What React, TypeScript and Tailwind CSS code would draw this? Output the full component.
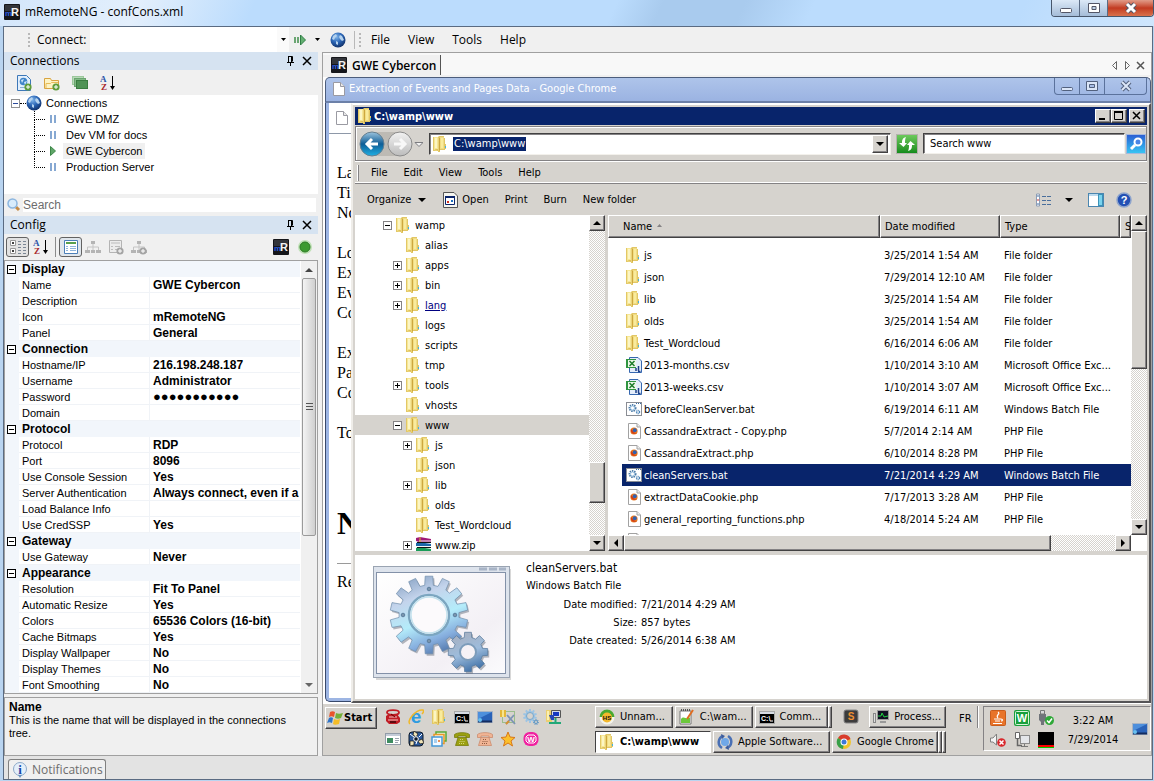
import React from 'react';
import clsx from 'clsx';

const SANS = "font-['Liberation_Sans',Arial,sans-serif]";
const SEGOE = "font-['Open_Sans','Noto_Sans',sans-serif]";
const TAHOMA = "font-['DejaVu_Sans_Condensed','DejaVu_Sans',sans-serif]";
const RAISED = 'border border-t-white border-l-white border-r-[#424142] border-b-[#424142] bg-[#d6d3ce] shadow-[inset_-1px_-1px_0_#848284]';
const SUNKEN = 'border border-t-[#424142] border-l-[#424142] border-r-[#f3f1ec] border-b-[#f3f1ec] shadow-[inset_1px_1px_0_#848284] bg-white';

interface IconProps {
    className?: string;
}

/* ---------- shared drawings ---------- */

const gearPoints = (cx: number, cy: number, outer: number, inner: number, teeth: number) => {
    const pts: string[] = [];
    const step = (Math.PI * 2) / teeth;
    for (let i = 0; i < teeth; i++) {
        const a = i * step - Math.PI / 2;
        [[-0.32, inner], [-0.22, outer], [0.22, outer], [0.32, inner]].forEach(([k, r]) => {
            pts.push(`${(cx + Math.cos(a + k * step) * r).toFixed(1)},${(cy + Math.sin(a + k * step) * r).toFixed(1)}`);
        });
    }
    return pts.join(' ');
};

const folderArt = (
    <>
        <path d="M0 1 H5 L6 0 H11 V2 H12 V8 H13 V13 H12 V14 H7 V16 H5 V15 H0Z" fill="#e2c766" />
        <path d="M6 1 H11 V13 H6Z" fill="#f1dc84" />
        <path d="M1 1 H5 V15 L1 14Z" fill="#f6e796" />
        <path d="M2 2 H4 V12 H2Z" fill="#fcf5c4" />
        <path d="M5 2 H6 V15 H5Z" fill="#ead27a" />
        <path d="M6 2 L7 1 V14 L6 15Z" fill="#cda83e" />
        <path d="M8 2 H10 V12 H8Z" fill="#f9eb9c" />
        <path d="M1 13 L5 15 V13Z" fill="#dfc15c" />
        <path d="M12 10 H13 V12 H12Z" fill="#3fb2e6" />
    </>
);

const Folder: React.FC<IconProps> = ({ className }) => (
    <svg className={clsx('h-4 w-[14px] shrink-0', className)} viewBox="0 0 14 16">
        {folderArt}
    </svg>
);

const MrLogo: React.FC = () => (
    <svg className="h-4 w-4 shrink-0" viewBox="0 0 16 16">
        <rect width="16" height="16" rx="1" fill="#15161a" />
        <rect x="1" y="1" width="14" height="6" fill="#33353a" />
        <text x="1" y="12" fontSize="8" fontWeight="bold" fontFamily="Liberation Sans" fill="#2c5ee0">m</text>
        <text x="7" y="12" fontSize="11" fontWeight="bold" fontFamily="Liberation Sans" fill="#f4f4f4">R</text>
    </svg>
);

const Globe: React.FC = () => (
    <svg className="h-4 w-4 shrink-0" viewBox="0 0 16 16">
        <defs>
            <radialGradient id="globe" cx="0.4" cy="0.3" r="0.75">
                <stop offset="0" stopColor="#7fb4ea" />
                <stop offset="0.5" stopColor="#2a64b4" />
                <stop offset="1" stopColor="#0f2c62" />
            </radialGradient>
        </defs>
        <circle cx="8" cy="8" r="7.5" fill="url(#globe)" />
        <path d="M3 4 L6 2 L7 4 L5 6 L4 8 L2 7Z M10 3 L12 4 L14 8 L12 9 L10 7 L9 5Z M6 9 L8 10 L8 13 L6 12Z" fill="#b4d2ee" />
    </svg>
);

const Triangle: React.FC<{ dir: 'up' | 'down' | 'left' | 'right'; color?: string }> = ({ dir, color = '#000' }) => {
    const d = {
        up: 'M0 6 L4 2 L8 6Z',
        down: 'M0 2 L4 6 L8 2Z',
        left: 'M6 0 L2 4 L6 8Z',
        right: 'M2 0 L6 4 L2 8Z',
    }[dir];
    return (
        <svg className="h-2 w-2 shrink-0" viewBox="0 0 8 8">
            <path d={d} fill={color} />
        </svg>
    );
};

const AZSort: React.FC = () => (
    <svg className="h-4 w-4" viewBox="0 0 16 16" fontSize="9" fontWeight="bold" fontFamily="Liberation Serif">
        <text x="0" y="7" fill="#2b55a8">A</text>
        <text x="1" y="15" fill="#a8282c">Z</text>
        <path d="M12.500 1 V13" stroke="#000" />
        <path d="M10 11 H15 L12.500 15Z" fill="#000" />
    </svg>
);

const PlusBadge: React.FC<{ color: string }> = ({ color }) => (
    <>
        <circle cx="12" cy="12" r="3.6" fill={color} />
        <path d="M10 12 H14 M12 10 V14" stroke="#fff" />
    </>
);

const Page: React.FC = () => (
    <svg className="h-4 w-4 shrink-0" viewBox="0 0 16 16">
        <path d="M2.500 1.500 H9.500 L13.500 5.500 V14.500 H2.500Z" fill="#fff" stroke="#9a9aa2" />
        <path d="M9.500 1.500 V5.500 H13.500" fill="#e8e8e8" stroke="#9a9aa2" />
    </svg>
);

/* ---------- classic controls ---------- */

interface ScrollbarProps {
    before: number;
    thumb: number;
    after: number;
    horizontal?: boolean;
}

const Scrollbar: React.FC<ScrollbarProps> = ({ before, thumb, after, horizontal }) => (
    <div
        className={clsx(
            'flex shrink-0 bg-[repeating-conic-gradient(#ffffff_0_25%,#d6d3ce_0_50%)] bg-[length:2px_2px]',
            horizontal ? 'h-4' : 'w-4 flex-col'
        )}
    >
        <button aria-label="Scroll back" className={clsx('flex h-4 w-4 shrink-0 items-center justify-center', RAISED)}>
            <Triangle dir={horizontal ? 'left' : 'up'} />
        </button>
        <div className="basis-0" style={{ flexGrow: before }} />
        <div className={clsx('basis-0', RAISED)} style={{ flexGrow: thumb }} />
        <div className="basis-0" style={{ flexGrow: after }} />
        <button aria-label="Scroll forward" className={clsx('flex h-4 w-4 shrink-0 items-center justify-center', RAISED)}>
            <Triangle dir={horizontal ? 'right' : 'down'} />
        </button>
    </div>
);

/* ---------- title bar and main toolbar ---------- */

const TitleBar: React.FC = () => (
    <header className="flex h-[26px] shrink-0 items-start justify-between bg-[linear-gradient(115deg,#d3e6fb_0%,#e3effc_12%,#bbdcfd_22%,#bbdcfd_53%,#a9cbee_57%,#a9cbee_64%,#bbdcfd_70%,#bbdcfd_88%,#cfe6fd_100%)]">
        <div className={clsx('flex h-6 items-center gap-[5px] pl-1 text-xs', SEGOE)}>
            <MrLogo />
            <h1>mRemoteNG - confCons.xml</h1>
        </div>
        <div className="flex h-[17px] overflow-hidden rounded-b-[4px] border border-t-0 border-[#47566b]">
            <button aria-label="Minimize" className="flex w-7 items-center justify-center border-r border-[#5b6c84] bg-linear-to-b from-[#dce9f7] to-[#a4bcd8]">
                <svg className="h-[14px] w-3" viewBox="0 0 12 14"><rect x="0.5" y="7.5" width="11" height="4" rx="1" fill="#fff" stroke="#535666" /></svg>
            </button>
            <button aria-label="Maximize" className="flex w-7 items-center justify-center border-r border-[#5b6c84] bg-linear-to-b from-[#dce9f7] to-[#a4bcd8]">
                <svg className="h-[14px] w-3" viewBox="0 0 12 14"><path d="M.5 2.5 H11.5 V11.5 H.5Z M4 5.500 V8.500 H8 V5.500Z" fill="#fff" fillRule="evenodd" stroke="#535666" /></svg>
            </button>
            <button aria-label="Close" className="flex w-[45px] items-center justify-center bg-linear-to-b from-[#e09b88] via-[#c23a20] to-[#d8714c]">
                <svg className="h-[14px] w-3" viewBox="0 0 12 14"><path d="M2 3 L10 11 M10 3 L2 11" stroke="#535666" strokeWidth="5" /><path d="M2 3 L10 11 M10 3 L2 11" stroke="#fff" strokeWidth="3" /></svg>
            </button>
        </div>
    </header>
);

const Grip: React.FC = () => (
    <span className="flex flex-col gap-[2px]">
        {[0, 1, 2, 3].map((i) => <span key={i} className="h-[2px] w-[2px] bg-[#b8b8b8]" />)}
    </span>
);

const MainToolbar: React.FC = () => (
    <div className={clsx('flex h-[25px] shrink-0 items-center bg-[#f0f0f0] text-xs', SEGOE)}>
        <div className="flex w-[86px] items-center gap-[7px] pl-6">
            <Grip />
            <label htmlFor="connect">Connect:</label>
        </div>
        <input id="connect" className="h-full w-[187px] bg-white px-1 outline-none" />
        <button aria-label="Connect history" className="flex h-full w-3 items-center justify-center bg-[#fafafa]">
            <svg className="h-1 w-[5px]" viewBox="0 0 5 4"><path d="M0 0 H5 L2.5 3Z" /></svg>
        </button>
        <button aria-label="Quick connect" className="ml-1 flex h-full items-center gap-2">
            <svg className="h-3 w-[14px]" viewBox="0 0 14 12">
                <path d="M2 3 V9 M5 3 V9" stroke="#6aa572" strokeWidth="2" />
                <path d="M7.500 1 L12.500 6 L7.500 11Z" fill="#63b071" stroke="#2f7e45" />
            </svg>
            <svg className="h-1 w-[5px]" viewBox="0 0 5 4"><path d="M0 0 H5 L2.5 3Z" /></svg>
        </button>
        <button aria-label="Connections" className="ml-[10px]"><Globe /></button>
        <div className="ml-2 flex h-[18px] items-center gap-[3px] border-l border-[#b8b8b8] pl-1"><Grip /></div>
        <nav className="flex pl-px">
            {['File', 'View', 'Tools', 'Help'].map((m) => (
                <button key={m} className="px-[9px]">{m}</button>
            ))}
        </nav>
    </div>
);

/* ---------- left side ---------- */

const PanelHeader: React.FC<{ title: string }> = ({ title }) => (
    <div className={clsx('flex h-[18px] shrink-0 items-center bg-[#d6e3f1] pr-[6px] pl-[6px] text-xs', SEGOE)}>
        <h2 className="flex-1">{title}</h2>
        <button aria-label={`Pin ${title}`}>
            <svg className="h-3 w-3" viewBox="0 0 12 12" fill="none" stroke="#000">
                <path d="M4.500 1.500 H8.500 V6.500 M4.500 1 V7 M7.500 2 V7 M3 7.500 H10 M6.500 8 V11" />
            </svg>
        </button>
        <button aria-label={`Close ${title}`} className="ml-[6px]">
            <svg className="h-[10px] w-[10px]" viewBox="0 0 10 10"><path d="M1 1 L9 9 M9 1 L1 9" stroke="#000" strokeWidth="1.500" /></svg>
        </button>
    </div>
);

const servers = [
    { name: 'GWE DMZ', active: false },
    { name: 'Dev VM for docs', active: false },
    { name: 'GWE Cybercon', active: true },
    { name: 'Production Server', active: false },
];

const ConnectionsPanel: React.FC = () => (
    <section>
        <PanelHeader title="Connections" />
        <div className="flex h-[25px] items-center gap-3 bg-[#f0f0f0] pl-3">
            <button aria-label="New connection">
                <svg className="h-4 w-4" viewBox="0 0 16 16">
                    <path d="M1.500 .5 H10.500 L14.500 4.500 V15.500 H1.500Z" fill="#e2effc" stroke="#3d78b8" />
                    <circle cx="7.500" cy="6.500" r="3.800" fill="#3f84c8" />
                    <path d="M5 5 L8 4 L6 8Z M8 7 L11 6 L9 10Z" fill="#cfe6fa" />
                    <path d="M4 12.500 H9" stroke="#8ab0d4" />
                    <PlusBadge color="#5f9c3a" />
                </svg>
            </button>
            <button aria-label="New folder">
                <svg className="h-4 w-4" viewBox="0 0 16 16">
                    <path d="M.5 3.500 H6.500 L7.500 5.500 H14.500 V13.500 H.5Z" fill="#fdf3c4" stroke="#d9a441" />
                    <path d="M2 13 V8.500 H6.500 L7.500 7.500 H14" fill="none" stroke="#e6bb59" />
                    <PlusBadge color="#5f9c3a" />
                </svg>
            </button>
            <button aria-label="View">
                <svg className="h-4 w-4" viewBox="0 0 16 16">
                    <rect x="0.5" y="1.500" width="11" height="8" fill="#b9d8b9" stroke="#9cc89c" />
                    <rect x="2.500" y="3.500" width="11" height="8" fill="#84ba87" stroke="#6aa66e" />
                    <rect x="4.500" y="5.500" width="11" height="8" fill="#4f9355" stroke="#397c40" />
                </svg>
            </button>
            <button aria-label="Sort"><AZSort /></button>
        </div>
        <ul className={clsx('h-[99px] overflow-hidden bg-white pl-[7px] text-[11px]', SANS)}>
            <li className="flex h-4 items-center">
                <span className="flex h-[9px] w-[9px] items-center justify-center border border-[#919191] text-[#2b4b9b]">
                    <span className="h-px w-[5px] bg-current" />
                </span>
                <span className="w-[6px] border-t border-dotted border-black" />
                <Globe />
                <span className="pl-1">Connections</span>
            </li>
            {servers.map((s, i) => (
                <li key={s.name} className="flex h-4 items-center pl-[23px]">
                    <span className="flex h-4 w-[11px] flex-col">
                        <span className="flex-1 border-b border-l border-dotted border-black" />
                        <span className={clsx('flex-1', i < servers.length - 1 && 'border-l border-dotted border-black')} />
                    </span>
                    <svg className="mx-1 h-[10px] w-2" viewBox="0 0 8 10">
                        {s.active
                            ? <path d="M1.500 .5 L6.500 5 L1.500 9.500Z" fill="#5fa668" stroke="#3c8748" />
                            : <path d="M2 1 V9 M6 1 V9" stroke="#86a8d2" strokeWidth="2" />}
                    </svg>
                    <span className={clsx('ml-[2px] h-4 px-[3px] leading-4', s.active && 'bg-[#f0f0f0]')}>{s.name}</span>
                </li>
            ))}
        </ul>
        <div className="flex h-[22px] items-center gap-[2px] bg-[#f0f0f0] pr-[2px] pl-[3px]">
            <svg className="h-[14px] w-[14px]" viewBox="0 0 14 14">
                <path d="M9 9 L12 12" stroke="#c58b46" strokeWidth="3" />
                <circle cx="5.500" cy="5.500" r="4.500" fill="#d8ecfc" stroke="#8cb6df" strokeWidth="1.500" />
            </svg>
            <input aria-label="Search connections" placeholder="Search" className={clsx('h-[14px] min-w-0 flex-1 bg-white text-xs outline-none placeholder:text-[#6d6d6d]', SANS)} />
        </div>
    </section>
);

type Row = [string, string?];

const properties: { group: string; rows: Row[] }[] = [
    { group: 'Display', rows: [['Name', 'GWE Cybercon'], ['Description'], ['Icon', 'mRemoteNG'], ['Panel', 'General']] },
    { group: 'Connection', rows: [['Hostname/IP', '216.198.248.187'], ['Username', 'Administrator'], ['Password', '●●●●●●●●●●●'], ['Domain']] },
    {
        group: 'Protocol',
        rows: [
            ['Protocol', 'RDP'], ['Port', '8096'], ['Use Console Session', 'Yes'],
            ['Server Authentication', 'Always connect, even if a'], ['Load Balance Info'], ['Use CredSSP', 'Yes'],
        ],
    },
    { group: 'Gateway', rows: [['Use Gateway', 'Never']] },
    {
        group: 'Appearance',
        rows: [
            ['Resolution', 'Fit To Panel'], ['Automatic Resize', 'Yes'], ['Colors', '65536 Colors (16-bit)'],
            ['Cache Bitmaps', 'Yes'], ['Display Wallpaper', 'No'], ['Display Themes', 'No'], ['Font Smoothing', 'No'],
        ],
    },
];

const HierarchyIcon: React.FC<{ plus?: boolean }> = ({ plus }) => (
    <svg className="h-4 w-4" viewBox="0 0 16 16">
        <path d="M8 4 V8 M2.500 11 V8 H13.500 V11 M8 8 V11" fill="none" stroke="#c4c4c4" />
        <path d="M6 2 H10 V5 H6Z M0 11 H5 V14 H0Z M6 11 H10 V14 H6Z M11 11 H16 V14 H11Z" fill="#b4b4b4" />
        {plus && <PlusBadge color="#a4a4a4" />}
    </svg>
);

const ConfigPanel: React.FC = () => (
    <section className="flex min-h-0 flex-1 flex-col">
        <PanelHeader title="Config" />
        <div className="flex h-[26px] shrink-0 items-center bg-[#f0f0f0] pr-[5px] pl-[2px]">
            <button aria-label="Categorized" className="flex h-5 w-[23px] items-center justify-center rounded-[3px] border border-[#626262] bg-[#e2e2e2]">
                <svg className="h-4 w-[18px]" viewBox="0 0 18 16" fill="none">
                    <path d="M1.500 1.500 H6.500 V6.500 H1.500Z M1.500 9.500 H6.500 V14.500 H1.500Z" fill="#fff" stroke="#9a9a9a" />
                    <path d="M3 4 H5 M4 3 V5 M3 12 H5 M4 11 V13" stroke="#000" />
                    <path d="M9 2.500 H12 M14 2.500 H17 M9 5.500 H12 M14 5.500 H17 M9 8.500 H12 M14 8.500 H17 M9 11.500 H12 M14 11.500 H17 M9 14.500 H12 M14 14.500 H17" stroke="#7b8795" />
                </svg>
            </button>
            <button aria-label="Alphabetical" className="ml-1"><AZSort /></button>
            <span className="mr-[3px] ml-[6px] h-5 w-px bg-[#8b8b8b]" />
            <button aria-label="Properties" className="flex h-5 w-[23px] items-center justify-center rounded-[3px] border border-[#626262] bg-[#e0e6ec]">
                <svg className="h-4 w-4" viewBox="0 0 16 16" fill="none">
                    <path d="M1.500 1.500 H14.500 V14.500 H1.500Z" fill="#fff" stroke="#4b7fb8" />
                    <path d="M3 4 H13" stroke="#59a04c" strokeWidth="2" />
                    <path d="M3 7.500 H5 M7 7.500 H13 M3 9.500 H5 M7 9.500 H13 M3 11.500 H5 M7 11.500 H13" stroke="#8db4dc" />
                </svg>
            </button>
            <div className="ml-[3px] flex gap-[7px]">
                <button aria-label="Inheritance"><HierarchyIcon /></button>
                <button aria-label="Default properties">
                    <svg className="h-4 w-4" viewBox="0 0 16 16" fill="none">
                        <path d="M1.500 1.500 H13.500 V13.500 H1.500Z" fill="#ececec" stroke="#b4b4b4" />
                        <path d="M3 4 H12 M3 7.500 H5 M7 7.500 H12 M3 10.500 H5 M7 10.500 H12" stroke="#bcbcbc" />
                        <PlusBadge color="#a4a4a4" />
                    </svg>
                </button>
                <button aria-label="Default inheritance"><HierarchyIcon plus /></button>
            </div>
            <button aria-label="Icon" className="ml-auto"><MrLogo /></button>
            <button aria-label="Status" className="ml-2">
                <svg className="h-4 w-4" viewBox="0 0 16 16">
                    <circle cx="8" cy="8" r="7" fill="#bfe0b6" />
                    <circle cx="8" cy="8" r="5" fill="#3c9a30" stroke="#2a7a22" />
                </svg>
            </button>
        </div>
        <div className="flex min-h-0 flex-1 overflow-hidden border border-[#a0a0a0] bg-white">
            <table className={clsx('h-min flex-1 table-fixed border-separate border-spacing-0 text-[11px] leading-[14px]', SANS)}>
                <colgroup>
                    <col className="w-[14px]" />
                    <col className="w-[131px]" />
                    <col />
                </colgroup>
                {properties.map((p) => (
                    <tbody key={p.group}>
                        <tr className="h-4 bg-[#f2f6fb]">
                            <td className="p-0">
                                <button aria-label={`Collapse ${p.group}`} className="ml-[2px] flex h-[9px] w-[9px] items-center justify-center border border-black bg-white">
                                    <span className="h-px w-[5px] bg-black" />
                                </button>
                            </td>
                            <th colSpan={2} className="p-0 pl-[3px] text-left text-xs leading-[14px] font-bold">{p.group}</th>
                        </tr>
                        {p.rows.map(([label, value]) => (
                            <tr key={label} className="h-4">
                                <td className="bg-[#f2f6fb] p-0" />
                                <th className="border-r border-b border-[#f0f3f7] p-0 pl-[3px] text-left font-normal whitespace-nowrap">{label}</th>
                                <td className={clsx('overflow-hidden border-b border-[#f0f3f7] p-0 pl-[3px] leading-[14px] font-bold whitespace-nowrap', label === 'Password' ? 'text-[13px]' : 'text-xs')}>{value}</td>
                            </tr>
                        ))}
                    </tbody>
                ))}
            </table>
            <div className="ml-px flex w-4 shrink-0 flex-col items-center bg-[#f0f0f0]">
                <button aria-label="Scroll up" className="flex h-[17px] w-full shrink-0 items-center justify-center"><Triangle dir="up" color="#444" /></button>
                <div className="flex min-h-0 w-[14px] grow-[255] basis-0 flex-col items-center justify-center gap-[2px] rounded-[2px] border border-[#9a9a9a] bg-linear-to-r from-[#f4f4f4] to-[#cfcfcf]">
                    <span className="h-px w-[7px] bg-[#555]" />
                    <span className="h-px w-[7px] bg-[#555]" />
                    <span className="h-px w-[7px] bg-[#555]" />
                </div>
                <div className="min-h-0 grow-[140] basis-0" />
                <button aria-label="Scroll down" className="flex h-[17px] w-full shrink-0 items-center justify-center"><Triangle dir="down" color="#666" /></button>
            </div>
        </div>
        <div className={clsx('mt-[3px] h-[59px] shrink-0 border border-[#a0a0a0] bg-[#f0f0f0] pt-[2px] pr-6 pl-1 text-[11px] leading-[13px]', SANS)}>
            <h3 className="text-xs leading-[14px] font-bold">Name</h3>
            <p>This is the name that will be displayed in the connections tree.</p>
        </div>
    </section>
);

/* ---------- remote desktop: browser behind the explorer ---------- */

const browserLines = ['Last', 'Time', 'Now', '', 'Log', 'Extr', 'Eve', 'Con', '', 'Extr', 'Page', 'Con', '', 'Total'];

const BrowserStrip: React.FC = () => (
    <div className="mb-px ml-[2px] flex w-[26px] shrink-0 flex-col overflow-hidden rounded-bl-[5px] border-b border-l border-[#38486a] bg-[#9db5e3] pb-[3px] pl-[3px]">
        <div className="flex h-[31px] shrink-0 items-center border-b border-[#8e98a8] bg-white pl-[5px]">
            <Page />
        </div>
        <div className="flex-1 bg-white pt-[29px] pl-2 font-['Liberation_Serif',serif] text-base leading-5">
            {browserLines.map((l, i) => <p key={i} className="h-5">{l}</p>)}
            <p className="mt-[60px] text-[32px] leading-10 font-bold">N</p>
            <hr className="mt-5 border-[#9a9a9a]" />
            <p className="mt-2">Rea</p>
        </div>
    </div>
);

/* ---------- explorer ---------- */

interface TreeNode {
    name: string;
    level: number;
    box?: '+' | '-';
}

const tree: TreeNode[] = [
    { name: 'wamp', level: 0, box: '-' },
    { name: 'alias', level: 1 },
    { name: 'apps', level: 1, box: '+' },
    { name: 'bin', level: 1, box: '+' },
    { name: 'lang', level: 1, box: '+' },
    { name: 'logs', level: 1 },
    { name: 'scripts', level: 1 },
    { name: 'tmp', level: 1 },
    { name: 'tools', level: 1, box: '+' },
    { name: 'vhosts', level: 1 },
    { name: 'www', level: 1, box: '-' },
    { name: 'js', level: 2, box: '+' },
    { name: 'json', level: 2 },
    { name: 'lib', level: 2, box: '+' },
    { name: 'olds', level: 2 },
    { name: 'Test_Wordcloud', level: 2 },
    { name: 'www.zip', level: 2, box: '+' },
];

const indents = ['pl-7', 'pl-[38px]', 'pl-12'];

const ZipIcon: React.FC = () => (
    <svg className="h-4 w-4 shrink-0" viewBox="0 0 16 16">
        <path d="M0 1 L4 0 L15 2 V5 H3 L0 4Z" fill="#a01878" />
        <path d="M3 4 H15 M3 9 H15 M3 14 H15" stroke="#eee" />
        <path d="M0 6 L3 5 L15 7 V9 H3 L0 9Z" fill="#1c68a8" />
        <path d="M0 11 L3 10 L15 12 V14 H3 L0 14Z" fill="#1a9c58" />
        <path d="M1 5.500 H15 M1 10.500 H15 M1 15.500 H15" stroke="#111" />
        <path d="M4 0 V5" stroke="#d8b430" />
    </svg>
);

const FolderTree: React.FC = () => (
    <ul className="min-w-0 flex-1 overflow-hidden">
        {tree.map((n) => (
            <li key={n.name} className={clsx('flex h-5 items-center', indents[n.level], n.name === 'www' && 'bg-[#d6d3ce]')}>
                <span className="w-[13px] shrink-0">
                    {n.box && (
                        <button aria-label={`Toggle ${n.name}`} className="flex h-[9px] w-[9px] items-center justify-center border border-[#848284] bg-white">
                            <svg className="h-[5px] w-[5px]" viewBox="0 0 5 5">
                                <path d={n.box === '+' ? 'M0 2.500 H5 M2.500 0 V5' : 'M0 2.500 H5'} stroke="#000" />
                            </svg>
                        </button>
                    )}
                </span>
                <span className="w-[19px] shrink-0">{n.name === 'www.zip' ? <ZipIcon /> : <Folder />}</span>
                {n.name === 'lang'
                    ? <a href="#lang" className="pt-px text-[#000080] underline">{n.name}</a>
                    : <span className="pt-px">{n.name}</span>}
            </li>
        ))}
    </ul>
);

const CsvIcon: React.FC = () => (
    <svg className="h-4 w-4" viewBox="0 0 16 16">
        <path d="M3.500 .5 H12 L15.500 4 V15.500 H3.500Z" fill="#e4edfa" stroke="#3768b0" />
        <rect x="0" y="2" width="10" height="9" fill="#2f9440" />
        <rect x="2" y="3" width="8" height="7" fill="#eef8ea" />
        <path d="M3.500 4 L8.500 9 M8.500 4 L3.500 9" stroke="#1e7c2c" strokeWidth="1.500" />
        <path d="M10 11 V14 M12.500 9 V14 M12 14.500 H14.500" fill="none" stroke="#1d3f88" strokeWidth="1.500" />
    </svg>
);

const BatIcon: React.FC = () => (
    <svg className="h-[14px] w-4" viewBox="0 0 16 14">
        <rect x="0.5" y="0.5" width="15" height="13" fill="#fff" stroke="#8a8d94" />
        <path d="M10 1.500 H15" stroke="#3b6ea5" strokeDasharray="1 1" />
        <circle cx="6.500" cy="6" r="3" fill="none" stroke="#4b7ba8" strokeWidth="2" strokeDasharray="1.400 .8" />
        <circle cx="6.500" cy="6" r="2" fill="none" stroke="#9ec3e2" />
        <circle cx="12" cy="10" r="1.500" fill="none" stroke="#4a83b8" strokeWidth="1.500" strokeDasharray="1 .5" />
    </svg>
);

const PhpIcon: React.FC = () => (
    <svg className="h-4 w-4" viewBox="0 0 16 16">
        <path d="M2.500 .5 H11 L14.500 4 V15.500 H2.500Z" fill="#fff" stroke="#a2a2a2" />
        <path d="M11 .5 V4 H14.500" fill="#eee" stroke="#a2a2a2" />
        <circle cx="8" cy="8" r="3.600" fill="#e8761c" />
        <circle cx="8.700" cy="7.300" r="2" fill="#2f62b4" />
        <path d="M5 6 C4 10 8 12 11 10 C9 10 7 9.500 6.800 8Z" fill="#d03c1a" />
    </svg>
);

interface FileEntry {
    name: string;
    date: string;
    type: string;
    icon: React.FC;
}

const files: FileEntry[] = [
    { name: 'js', date: '3/25/2014 1:54 AM', type: 'File folder', icon: Folder },
    { name: 'json', date: '7/29/2014 12:10 AM', type: 'File folder', icon: Folder },
    { name: 'lib', date: '3/25/2014 1:54 AM', type: 'File folder', icon: Folder },
    { name: 'olds', date: '3/25/2014 1:54 AM', type: 'File folder', icon: Folder },
    { name: 'Test_Wordcloud', date: '6/16/2014 6:06 AM', type: 'File folder', icon: Folder },
    { name: '2013-months.csv', date: '1/10/2014 3:10 AM', type: 'Microsoft Office Exc...', icon: CsvIcon },
    { name: '2013-weeks.csv', date: '1/10/2014 3:07 AM', type: 'Microsoft Office Exc...', icon: CsvIcon },
    { name: 'beforeCleanServer.bat', date: '6/19/2014 6:11 AM', type: 'Windows Batch File', icon: BatIcon },
    { name: 'CassandraExtract - Copy.php', date: '5/7/2014 2:14 AM', type: 'PHP File', icon: PhpIcon },
    { name: 'CassandraExtract.php', date: '6/10/2014 8:28 PM', type: 'PHP File', icon: PhpIcon },
    { name: 'cleanServers.bat', date: '7/21/2014 4:29 AM', type: 'Windows Batch File', icon: BatIcon },
    { name: 'extractDataCookie.php', date: '7/17/2013 3:28 AM', type: 'PHP File', icon: PhpIcon },
    { name: 'general_reporting_functions.php', date: '4/18/2014 5:24 AM', type: 'PHP File', icon: PhpIcon },
    { name: '', date: '', type: '', icon: PhpIcon },
];

const HEAD = 'h-[23px] border border-t-white border-l-white border-r-[#424142] border-b-[#424142] bg-[#d6d3ce] p-0 pt-px pl-1 text-left font-normal shadow-[inset_-1px_-1px_0_#848284]';

const FileTable: React.FC = () => (
    <div className="min-h-0 flex-1 overflow-hidden">
        <table className="w-full table-fixed border-separate border-spacing-0 whitespace-nowrap">
            <colgroup>
                <col className="w-[14px]" />
                <col />
                <col className="w-[120px]" />
                <col className="w-[120px]" />
                <col className="w-[11px]" />
            </colgroup>
            <thead>
                <tr>
                    <th colSpan={2} className={HEAD}>
                        <span className="flex items-center gap-[5px] pl-[10px]">
                            Name
                            <svg className="mb-[3px] h-1 w-[5px]" viewBox="0 0 5 4"><path d="M0 3 L2.500 0 L5 3Z" fill="#848284" /></svg>
                        </span>
                    </th>
                    <th className={HEAD}>Date modified</th>
                    <th className={HEAD}>Type</th>
                    <th className={clsx(HEAD, 'overflow-hidden')}>S</th>
                </tr>
                <tr className="h-[6px]"><td colSpan={5} className="p-0" /></tr>
            </thead>
            <tbody>
                {files.map(({ name, date, type, icon: Icon }) => {
                    const cell = clsx('p-0', name === 'cleanServers.bat' && 'bg-[#08246b] text-white');
                    return (
                        <tr key={name} className="h-[22px]">
                            <td className="p-0" />
                            <td className={cell}>
                                <span className="flex items-center pl-1">
                                    <span className="flex w-[18px]"><Icon /></span>
                                    <span className="pt-px">{name}</span>
                                </span>
                            </td>
                            <td className={clsx(cell, 'pt-px pl-1')}>{date}</td>
                            <td className={clsx(cell, 'pt-px pl-1')}>{type}</td>
                            <td className={cell} />
                        </tr>
                    );
                })}
            </tbody>
        </table>
    </div>
);

const AddressRow: React.FC = () => (
    <div className="mt-px flex h-[35px] shrink-0 items-center border border-[#848284] pl-[3px] shadow-[inset_1px_1px_0_#fff,0_1px_0_#fff]">
        <svg className="h-7 w-[64px] shrink-0" viewBox="0 0 64 28">
            <defs>
                <linearGradient id="back" x1="0" y1="0" x2="0" y2="1">
                    <stop offset="0" stopColor="#9cc4de" />
                    <stop offset="0.5" stopColor="#0f5e96" />
                    <stop offset="1" stopColor="#20b0e4" />
                </linearGradient>
                <linearGradient id="fwd" x1="0" y1="0" x2="0" y2="1">
                    <stop offset="0" stopColor="#f2f2f2" />
                    <stop offset="1" stopColor="#bcbcbc" />
                </linearGradient>
            </defs>
            <path d="M13 2 H42 V26 H13 C20 20 20 8 13 2Z" fill="#bdbab4" />
            <circle cx="13" cy="14" r="12" fill="url(#back)" stroke="#667f90" />
            <path d="M19 14 H9 M13 9 L8 14 L13 19" fill="none" stroke="#fff" strokeWidth="3" />
            <circle cx="41" cy="14" r="12" fill="url(#fwd)" stroke="#8b8b8b" />
            <path d="M35 14 H45 M41 9 L46 14 L41 19" fill="none" stroke="#f8f8f8" strokeWidth="3" />
            <path d="M56 12.500 H64 L60 16.500Z" fill="#f2f2f2" stroke="#7c7c80" />
        </svg>
        <div className={clsx('ml-[6px] flex h-[22px] min-w-0 flex-1 items-center p-[2px]', SUNKEN)}>
            <Folder className="mx-px" />
            <button className="ml-[5px] bg-[#08246b] px-px text-[11px] leading-[14px] text-white">C:\wamp\www</button>
            <button aria-label="Address history" className={clsx('ml-auto flex h-[18px] w-4 items-center justify-center', RAISED)}>
                <Triangle dir="down" />
            </button>
        </div>
        <button aria-label="Refresh" className="ml-[5px] border border-[#b5b2ad] bg-linear-to-b from-[#6cca5c] to-[#118c1c]">
            <svg className="h-[18px] w-5" viewBox="0 0 20 18">
                <path d="M9 2 C5 3 5 6 5 8 H2 L6.500 12 L10 8 H8 C8 6 8 4 9 2Z" fill="#fff" />
                <path d="M11 16 C15 15 15 12 15 10 H18 L13.500 6 L10 10 H12 C12 12 12 14 11 16Z" fill="#fff" />
            </svg>
        </button>
        <input aria-label="Search www" placeholder="Search www" className={clsx('ml-[5px] h-[21px] w-[202px] px-[6px] text-[11px] outline-none placeholder:text-black', SUNKEN)} />
        <button aria-label="Search" className="ml-px border border-[#a4b9dc] bg-linear-to-b from-[#2c5fd4] to-[#39c4f2]">
            <svg className="h-[18px] w-[18px]" viewBox="0 0 18 18">
                <circle cx="11" cy="7" r="3.500" fill="#4a86e6" stroke="#fff" strokeWidth="2" />
                <path d="M8 10 L4 14" stroke="#fff" strokeWidth="3" />
            </svg>
        </button>
    </div>
);

const GearPreview: React.FC = () => (
    <svg className="h-[114px] w-[138px] shrink-0" viewBox="0 0 138 114">
        <defs>
            <linearGradient id="gear" x1="0.3" y1="0" x2="0.7" y2="1">
                <stop offset="0" stopColor="#8fa8c8" />
                <stop offset="0.25" stopColor="#c4d4ec" />
                <stop offset="0.55" stopColor="#b4ecfa" />
                <stop offset="0.8" stopColor="#86aede" />
                <stop offset="1" stopColor="#4f74a8" />
            </linearGradient>
            <linearGradient id="gearSmall" x1="0.3" y1="0" x2="0.7" y2="1">
                <stop offset="0" stopColor="#a8b0c0" />
                <stop offset="0.5" stopColor="#9dbcdc" />
                <stop offset="1" stopColor="#3a6ca4" />
            </linearGradient>
            <linearGradient id="paper" x1="0" y1="0" x2="1" y2="1">
                <stop offset="0" stopColor="#fff" />
                <stop offset="0.7" stopColor="#f3f0f5" />
                <stop offset="1" stopColor="#fbfbfd" />
            </linearGradient>
        </defs>
        <rect x="3" y="3" width="135" height="111" fill="#d8d8d8" />
        <rect x="0.5" y="0.5" width="136" height="111" fill="#dde3ec" stroke="#9aa4b2" />
        <rect x="3.500" y="6.500" width="129" height="101" fill="url(#paper)" stroke="#8391a8" />
        <path d="M106 3 H133" stroke="#a8b4c6" strokeWidth="3" strokeDasharray="8 2" />
        <g transform="translate(1.500 2)" fill="#6d7480" opacity="0.5">
            <polygon points={gearPoints(56, 49, 39, 30, 14)} />
            <polygon points={gearPoints(95, 86, 20, 15, 8)} />
        </g>
        <polygon points={gearPoints(56, 49, 39, 30, 14)} fill="url(#gear)" stroke="#6f8caa" strokeWidth="0.7" />
        <circle cx="56" cy="49" r="20" fill="#fcfafc" stroke="#7ca6c0" strokeWidth="2.500" />
        <circle cx="56" cy="49" r="18" fill="none" stroke="#c4e2ee" strokeWidth="1.500" />
        {[[56, 23], [30, 49], [82, 49], [56, 75]].map(([x, y]) => (
            <circle key={`${x}-${y}`} cx={x} cy={y} r="1.800" fill="#7a94ac" stroke="#5d7f9e" />
        ))}
        <polygon points={gearPoints(95, 86, 20, 15, 8)} fill="url(#gearSmall)" stroke="#55779a" strokeWidth="0.7" />
        <circle cx="95" cy="86" r="8" fill="#f5f2f6" stroke="#7c9cba" strokeWidth="2" />
    </svg>
);

const details = [
    ['Date modified:', '7/21/2014 4:29 AM'],
    ['Size:', '857 bytes'],
    ['Date created:', '5/26/2014 6:38 AM'],
];

const Explorer: React.FC = () => (
    <div className={clsx('flex min-w-0 flex-1 flex-col border-2 border-t-white border-r-[#555456] border-b-[#555456] border-l-[#efede9] bg-[#d6d3ce] p-[2px] text-[11px] leading-[14px]', TAHOMA)}>
        <div className="flex h-[18px] shrink-0 items-center bg-[#08246b] pr-[2px] pl-[3px] font-bold text-white">
            <Folder />
            <h2 className="flex-1 pt-px pl-[2px]">C:\wamp\www</h2>
            <button aria-label="Minimize" className={clsx('h-[14px] w-4', RAISED)}>
                <svg viewBox="0 0 14 12" className="h-3 w-[14px]"><path d="M3 9 H9" stroke="#000" strokeWidth="2" /></svg>
            </button>
            <button aria-label="Maximize" className={clsx('h-[14px] w-4', RAISED)}>
                <svg viewBox="0 0 14 12" className="h-3 w-[14px]"><path d="M2.500 2 H10.500 V9.500 H2.500Z" fill="none" stroke="#000" /><path d="M2 2 H11" stroke="#000" strokeWidth="2" /></svg>
            </button>
            <button aria-label="Close" className={clsx('ml-[2px] h-[14px] w-4', RAISED)}>
                <svg viewBox="0 0 14 12" className="h-3 w-[14px]"><path d="M3 2 L10 9 M10 2 L3 9" stroke="#000" strokeWidth="1.500" /></svg>
            </button>
        </div>
        <AddressRow />
        <div className="mt-px flex h-[22px] shrink-0 items-center border-b border-[#848284] pl-[2px] shadow-[inset_0_-1px_0_#fff]">
            <span className="h-4 w-[2px] border-l border-l-white bg-[#848284]" />
            <nav className="flex gap-4 pl-3">
                {['File', 'Edit', 'View', 'Tools', 'Help'].map((m) => <button key={m}>{m}</button>)}
            </nav>
        </div>
        <div className="flex h-[31px] shrink-0 items-center pr-[15px] pl-3">
            <button className="flex items-center gap-[7px]">Organize <Triangle dir="down" /></button>
            <button className="ml-[17px] flex items-center gap-1">
                <svg className="h-4 w-[15px]" viewBox="0 0 15 16">
                    <path d="M.5 .5 H11 L14.500 4 V15.500 H.5Z" fill="#f5f5f0" stroke="#555" />
                    <path d="M2.500 4.500 H11.500 V12.500 H2.500Z" fill="#fff" stroke="#0a246a" />
                    <path d="M2 5 H12" stroke="#0a246a" strokeWidth="2" />
                    <path d="M4 9 H6 V11 H4Z" fill="#d03020" />
                    <path d="M8 8 H10 V10 H8Z" fill="#2070c0" />
                </svg>
                Open
            </button>
            <button className="ml-4">Print</button>
            <button className="ml-4">Burn</button>
            <button className="ml-4">New folder</button>
            <button aria-label="Change view" className="ml-auto flex items-center gap-[13px]">
                <svg className="h-4 w-4" viewBox="0 0 16 16">
                    <path d="M.5 2 V14 H3.500 V2Z" fill="#fff" stroke="#8c9cb4" />
                    <path d="M1 4 H3 M1 12 H3" stroke="#4270a8" />
                    <path d="M1 8 H3" stroke="#d03030" />
                    <path d="M6 4.500 H15 M6 8.500 H15 M6 12.500 H15" stroke="#4a6f9c" strokeDasharray="4 1" />
                </svg>
                <Triangle dir="down" />
            </button>
            <button aria-label="Preview pane" className="ml-[15px]">
                <svg className="h-4 w-4" viewBox="0 0 16 16">
                    <rect x="0.5" y="1.500" width="15" height="13" fill="#fff" stroke="#4a86b0" />
                    <path d="M1 3 H15" stroke="#7ab6dc" />
                    <rect x="10.500" y="2.500" width="4" height="11" fill="#7bd4ee" stroke="#3c92b8" />
                </svg>
            </button>
            <button aria-label="Help" className="ml-3">
                <svg className="h-4 w-4" viewBox="0 0 16 16">
                    <circle cx="8" cy="8" r="7" fill="#2350b4" stroke="#8ea4cc" strokeWidth="1.500" />
                    <text x="8" y="12" textAnchor="middle" fontSize="11" fontWeight="bold" fontFamily="Liberation Sans" fill="#fff">?</text>
                </svg>
            </button>
        </div>
        <div className="flex min-h-0 flex-1">
            <div className="flex w-[250px] shrink-0 bg-white">
                <FolderTree />
                <Scrollbar before={233} thumb={39} after={32} />
            </div>
            <div className="ml-[3px] flex min-w-0 flex-1 flex-col bg-white">
                <div className="flex min-h-0 flex-1">
                    <div className="flex min-w-0 flex-1"><FileTable /></div>
                    <Scrollbar before={0} thumb={136} after={151} />
                </div>
                <div className="flex">
                    <div className="flex-1"><Scrollbar horizontal before={0} thumb={427} after={64} /></div>
                    <span className="w-4" />
                </div>
            </div>
        </div>
        <div className="mt-1 flex h-36 shrink-0 bg-white pt-[11px] pl-[18px]">
            <GearPreview />
            <div className="pl-[15px]">
                <h3 className="-mt-[6px] text-xs leading-4">cleanServers.bat</h3>
                <p className="leading-5">Windows Batch File</p>
                <dl>
                    {details.map(([k, v]) => (
                        <div key={k} className="flex gap-1 leading-[18px]">
                            <dt className="w-[111px] text-right">{k}</dt>
                            <dd>{v}</dd>
                        </div>
                    ))}
                </dl>
            </div>
        </div>
    </div>
);

/* ---------- task bar ---------- */

const phoneArt = (fill: string, line: string, keys: string) => (
    <>
        <path d="M.5 6.500 V3.500 C3 1 13 1 15.500 3.500 V6.500 H12 V5 H4 V6.500Z M4 6.500 H12 L14.500 14.500 H1.500Z" fill={fill} stroke={line} strokeWidth="0.7" />
        <path d="M6 8.500 H10 M5.500 10.500 H10.500 M5 12.500 H11" stroke={keys} strokeDasharray="1 1" />
    </>
);

const quickLaunch: { label: string; art: React.ReactNode }[] = [
    {
        label: 'Red phone',
        art: <><path d="M1 7 L4 5 H12 L15 9 V13 L12 15 H4 L1 12Z" fill="#c01c24" /><ellipse cx="8" cy="3.500" rx="6" ry="2.300" fill="none" stroke="#c01c24" strokeWidth="1.800" /><path d="M4 8 H12 M3 11 H13" stroke="#f4c0c0" /><path d="M5 13 H11" stroke="#3c0408" strokeWidth="1.500" /><path d="M6 5 L10 8" stroke="#600" /></>,
    },
    {
        label: 'Internet Explorer',
        art: <><text x="8" y="14" textAnchor="middle" fontSize="19" fontWeight="bold" fontFamily="Liberation Sans" fill="#2f9ce0">e</text><path d="M2 15 C-2 12 8 0 15 1 C16 2 15 4 14 5" fill="none" stroke="#f0b828" strokeWidth="1.500" /></>,
    },
    { label: 'Explorer', art: <g transform="translate(1 0)">{folderArt}</g> },
    {
        label: 'Command prompt',
        art: <><rect x="0.5" y="2.500" width="15" height="12" fill="#000" stroke="#a8a8a8" /><path d="M1 4 H15" stroke="#d8dce4" strokeWidth="2" /><text x="2" y="12" fontSize="7" fontWeight="bold" fontFamily="Liberation Sans" fill="#fff">C:\</text><path d="M11 12 H14" stroke="#fff" /></>,
    },
    {
        label: 'Desktop',
        art: <><rect x="0.5" y="2.500" width="15" height="11" fill="#2a62b8" stroke="#a9b4c4" /><path d="M1 3 H15 L1 10Z" fill="#4e8fdc" /><path d="M1 12.500 H15" stroke="#122c60" strokeWidth="2" /><circle cx="3" cy="11" r="2" fill="#68c0f0" /></>,
    },
    {
        label: 'Server tools',
        art: <><rect x="2.500" y="2.500" width="12" height="11" fill="none" stroke="#60a848" strokeDasharray="1 1" /><path d="M0 1 H6 V8 H0Z" fill="#e4b838" /><path d="M2 1 H4 V8 H2Z" fill="#f8e48c" /><path d="M6 15 L14 6 M7 6 L15 15" stroke="#7d94b4" strokeWidth="1.800" /><path d="M6 15 L9 12" stroke="#d89030" strokeWidth="2" /></>,
    },
    {
        label: 'Services',
        art: <><polygon points={gearPoints(7, 7, 7, 5, 10)} fill="#9cc4e4" /><circle cx="7" cy="7" r="3.500" fill="#d6d3ce" stroke="#78a8cc" /><polygon points={gearPoints(13, 13, 3, 2, 7)} fill="#6a9cc4" /><circle cx="13" cy="13" r="1" fill="#d6d3ce" /></>,
    },
    {
        label: 'Network client',
        art: <><path d="M0 1 H6 V13 H0Z" fill="#ecd070" /><path d="M1 2 H3 V11 H1Z" fill="#fbf0b0" /><path d="M5.500 1.500 H14.500 V8.500 H5.500Z" fill="#d4dce8" stroke="#555" /><path d="M7 3 H13 V7 H7Z" fill="#1538c0" /><path d="M3 6 H8 V11 H5Z" fill="#2448b8" /><path d="M3 14 H15 M9.500 9 V14" stroke="#22a878" strokeWidth="2" /></>,
    },
    {
        label: 'Window',
        art: <><rect x="0.5" y="2.500" width="15" height="11" fill="#fff" stroke="#929ca8" /><path d="M1 4 H15" stroke="#c4ccd8" strokeWidth="2" /><path d="M2 7 H8 V12 H2Z" fill="#3e8c60" /><path d="M10 7.500 H14 M10 9.500 H14 M10 11.500 H13" stroke="#9aa4b0" /></>,
    },
    {
        label: 'Database',
        art: <><rect x="1" y="1" width="14" height="14" rx="3" fill="#2c5a9c" stroke="#0c1828" /><path d="M6 0 L10 3 L8 6 L5 4Z M10 10 L14 8 L16 12 L12 13Z M2 10 L6 10 L6 14 L2 15Z" fill="#f0e4b8" stroke="#111" strokeWidth="0.700" /><path d="M2 3 L6 6 M14 3 L11 6 M8 13 L9 10" stroke="#fff" /><circle cx="8" cy="8" r="2.300" fill="#0c1828" stroke="#fff" /></>,
    },
    {
        label: 'Pictures',
        art: <><rect x="5" y="1" width="10" height="9" fill="#e0f2d8" stroke="#58a838" strokeWidth="1.500" /><rect x="3" y="3.500" width="10" height="9" fill="#fdf0d8" stroke="#e89828" strokeWidth="1.500" /><rect x="1" y="6" width="10" height="9" fill="#f4faff" stroke="#4498d8" strokeWidth="1.500" /><path d="M3 8 H6 V12 H3Z" fill="#a8cfee" /><path d="M7 9 H9 V11 H7Z" fill="#e89058" /></>,
    },
    { label: 'Olive phone', art: phoneArt('#9ba010', '#6f7400', '#d4d880') },
    { label: 'Pink phone', art: phoneArt('#f0b494', '#c88464', '#8c5a40') },
    {
        label: 'Favourites',
        art: <path d="M8 1 L10 6 L15 6.500 L11 10 L12.500 15 L8 12 L3.500 15 L5 10 L1 6.500 L6 6Z" fill="#fbc02c" stroke="#d87818" />,
    },
    {
        label: 'Wamp',
        art: <><rect x="0.500" y="1" width="15" height="14" rx="6" fill="#f022a0" /><path d="M3 6 V10 L5 12 H11 L13 10 V6 L11 4 H5Z" fill="none" stroke="#fff" /><text x="8" y="11" textAnchor="middle" fontSize="8" fontWeight="bold" fontFamily="Liberation Sans" fill="#fff">W</text></>,
    },
];

const TaskButton: React.FC<{ label?: string; art: React.ReactNode; active?: boolean; className?: string }> = ({ label, art, active, className }) => (
    <button
        aria-label={label ? undefined : 'Sublime Text'}
        className={clsx(
            'flex h-[22px] items-center gap-[5px] overflow-hidden pl-[3px] whitespace-nowrap',
            active ? 'border border-t-[#424142] border-l-[#424142] border-r-white border-b-white bg-white font-bold' : label && RAISED,
            className
        )}
    >
        <svg className="h-4 w-4 shrink-0" viewBox="0 0 16 16">{art}</svg>
        {label}
    </button>
);

const Slivers: React.FC<{ count: number }> = ({ count }) => (
    <>
        {Array.from({ length: count }, (_, i) => (
            <span key={i} className={clsx('h-[22px] w-1', RAISED)} />
        ))}
    </>
);

const trayIcons: { label: string; art: React.ReactNode }[] = [
    { label: 'Java', art: <><rect x="0.500" y="0.500" width="15" height="15" rx="1" fill="#e8742a" stroke="#c85c1c" /><path d="M8 2 C11 4 5 5 8 8 M4 9 H11 C13 9 13 11 11 11 M5 11 H10 M3 13.500 H12" fill="none" stroke="#fff" strokeWidth="1.200" /></> },
    { label: 'Wamp server', art: <><rect width="16" height="16" rx="2" fill="#19a03c" /><rect x="1.500" y="1.500" width="13" height="13" rx="1" fill="none" stroke="#d8f4dc" /><text x="8" y="12" textAnchor="middle" fontSize="11" fontWeight="bold" fontFamily="Liberation Sans" fill="#fff">W</text></> },
    { label: 'Safely remove hardware', art: <><path d="M1 4 H8 V10 L6 12 V15 H3 V12 L1 10Z" fill="#70747a" /><path d="M2.500 .5 H6.500 V4 H2.500Z" fill="#d8d8d8" stroke="#777" /><circle cx="11.500" cy="10.500" r="4.500" fill="#2fa838" /><path d="M9 10.500 L11 12.500 L14 8.500" fill="none" stroke="#fff" strokeWidth="1.500" /></> },
    { label: 'Volume muted', art: <><path d="M.5 6 H3 L6.500 2 V13 L3 10 H.5Z" fill="#f4f4f4" stroke="#808080" /><circle cx="11.500" cy="10.500" r="4.300" fill="#d8282c" /><path d="M9.500 8.500 L13.500 12.500 M13.500 8.500 L9.500 12.500" stroke="#fff" strokeWidth="1.500" /></> },
    { label: 'Network', art: <><rect x="6.500" y="3.500" width="9" height="8" fill="#e4e6ea" stroke="#8a8a8a" /><path d="M7 14.500 H14 M10.500 12 V14" stroke="#777" /><path d="M1.500 .5 H5.500 V6.500 H1.500Z" fill="#fff" stroke="#666" /><path d="M3.500 7 V13.500 H8" fill="none" stroke="#666" strokeWidth="1.500" /></> },
    { label: 'CPU meter', art: <><rect width="16" height="13" fill="#000" /><rect y="13" width="16" height="2" fill="#f00" /><rect y="15" width="16" height="1" fill="#0c0" /></> },
];

const TaskBar: React.FC = () => (
    <footer className={clsx('flex h-[52px] shrink-0 bg-[#d6d3ce] pt-[3px] pl-[2px] text-[11px] shadow-[inset_0_1px_0_#fff]', TAHOMA)}>
        <button className={clsx('mt-px flex h-[22px] w-[52px] items-center gap-px pl-px font-bold', RAISED)}>
            <svg className="h-4 w-4 shrink-0" viewBox="0 0 16 16">
                <path d="M3 2 C5 1 6 1 8 2 L7 7 C5 6 4 6 2 7Z" fill="#e8542c" />
                <path d="M9 3 C11 4 13 4 16 3 L14 8 C12 9 10 9 8 8Z" fill="#74b038" />
                <path d="M2 8 C3 7 5 7 6 8 L5 13 C3 12 2 12 0 13Z" fill="#2f74c8" />
                <path d="M7 9 C9 10 11 10 13 9 L12 14 C9 15 7 15 6 14Z" fill="#f4bc28" />
            </svg>
            Start
        </button>
        <div className="ml-2 grid h-11 w-[184px] grid-cols-8">
            {quickLaunch.map((q) => (
                <button key={q.label} aria-label={q.label}>
                    <svg className="h-4 w-4" viewBox="0 0 16 16">{q.art}</svg>
                </button>
            ))}
        </div>
        <div className="ml-auto flex flex-col gap-[3px]">
            <div className="flex w-[351px] gap-[2px]">
                <TaskButton className="w-[78px]" label="Unnam..." art={<><circle cx="8" cy="8" r="7.500" fill="#f4f4ec" /><path d="M.5 8 A7.500 7.500 0 0 1 15.500 8Z" fill="#48a830" /><circle cx="8" cy="8.500" r="5" fill="#f4b82c" /><text x="8" y="11" textAnchor="middle" fontSize="6" fontWeight="bold" fontFamily="Liberation Sans" fill="#111">HS</text></>} />
                <TaskButton className="w-[78px]" label="C:\wam..." art={<><path d="M1 2 H12 V15 H1Z" fill="#fff" stroke="#777" /><path d="M2 1 H12" stroke="#555" strokeDasharray="1 1" strokeWidth="2" /><path d="M2 10 C5 6 8 12 11 8 V14 H2Z" fill="#6cc83c" /><path d="M14 1 L8 10" stroke="#e06c20" strokeWidth="2" /></>} />
                <div className="flex w-[78px]">
                    <TaskButton className="min-w-0 flex-1" label="Comm..." art={quickLaunch[3].art} />
                    <Slivers count={1} />
                </div>
                <TaskButton className="w-[33px] pl-[9px]" art={<><rect x="1" y="1" width="14" height="13" rx="2" fill="#3c3c3c" stroke="#888" /><text x="8" y="11" textAnchor="middle" fontSize="10" fontWeight="bold" fontFamily="Liberation Sans" fill="#f09030">S</text></>} />
                <TaskButton className="w-[77px] gap-[3px]" label="Process..." art={<><rect x="0.5" y="4.500" width="2" height="9" fill="#ddd" stroke="#888" /><rect x="4.500" y="1.500" width="11" height="9" fill="#112" stroke="#999" /><path d="M5 7 L8 7 L9 4 L11 8 L15 7" fill="none" stroke="#20d040" /><path d="M7 13 H13" stroke="#999" strokeWidth="2" /></>} />
            </div>
            <div className="flex w-[351px] gap-[2px]">
                <TaskButton active className="w-[116px]" label="C:\wamp\www" art={quickLaunch[2].art} />
                <TaskButton className="w-[117px] gap-[3px]" label="Apple Software..." art={<><circle cx="8" cy="8" r="4" fill="#70a8e8" /><path d="M5 14 C0 11 1 4 6 2 M11 2 C16 5 15 12 10 14" fill="none" stroke="#4a70b4" strokeWidth="2.500" /><path d="M4 0 L8 2 L5 5Z M12 16 L8 14 L11 11Z" fill="#3c5c9c" /></>} />
                <div className="flex flex-1">
                    <TaskButton className="min-w-0 flex-1 gap-[3px]" label="Google Chrome" art={<><circle cx="8" cy="8" r="7" fill="#f0c42c" /><path d="M8 8 L2 4 A7 7 0 0 1 14.500 5Z" fill="#d83c2c" /><path d="M8 8 L2 4 A7 7 0 0 0 7 15Z" fill="#38a048" /><circle cx="8" cy="8" r="3.500" fill="#fff" /><circle cx="8" cy="8" r="2.500" fill="#3c78d8" /></>} />
                    <Slivers count={2} />
                </div>
            </div>
        </div>
        <span className="mt-[5px] ml-[13px] w-[14px]">FR</span>
        <span className="mr-1 ml-1 h-[22px] w-[2px] border-l border-l-[#848284] bg-white" />
        <div className="flex h-[45px] w-[168px] items-center border border-t-[#848284] border-l-[#848284] border-r-white border-b-white pr-[2px] pl-[6px]">
            <div className="grid grid-cols-3 gap-x-2 gap-y-[6px]">
                {trayIcons.map((t) => (
                    <button key={t.label} aria-label={t.label}>
                        <svg className="h-4 w-4" viewBox="0 0 16 16">{t.art}</svg>
                    </button>
                ))}
            </div>
            <div className="flex-1 pt-[3px] text-center leading-[19px]">
                <p>3:22 AM</p>
                <p>7/29/2014</p>
            </div>
            <button aria-label="Show desktop">
                <svg className="h-4 w-4" viewBox="0 0 16 16">{quickLaunch[4].art}</svg>
            </button>
        </div>
    </footer>
);

const RemoteDesktop: React.FC = () => (
    <section className="ml-1 flex min-w-0 flex-1 flex-col border border-[#a0a0a0]">
        <div className={clsx('flex h-6 shrink-0 items-start border-b-2 border-[#f0f0f0] bg-[#f8f8f8] pr-[6px] text-xs', SEGOE)}>
            <button className="mt-[2px] flex h-5 items-center gap-[5px] border-r border-[#555] bg-[#f0f0f0] pr-1 pl-2 font-semibold">
                <MrLogo />
                <span className="pt-px">GWE Cybercon</span>
            </button>
            <div className="mt-2 ml-auto flex gap-1">
                <button aria-label="Previous tab"><svg className="h-[9px] w-[9px]" viewBox="0 0 9 9"><path d="M6.500 .5 V8.500 L2.500 4.500Z" fill="none" stroke="#666" /></svg></button>
                <button aria-label="Next tab"><svg className="h-[9px] w-[9px]" viewBox="0 0 9 9"><path d="M2.500 .5 V8.500 L6.500 4.500Z" fill="none" stroke="#666" /></svg></button>
                <button aria-label="Close tab"><svg className="h-[9px] w-[9px]" viewBox="0 0 9 9"><path d="M1 1 L8 8 M8 1 L1 8" stroke="#555" strokeWidth="1.500" /></svg></button>
            </div>
        </div>
        <div className="flex min-h-0 flex-1 flex-col bg-white">
            <div className={clsx('ml-[2px] flex h-[26px] shrink-0 items-start rounded-t-[5px] border border-b-2 border-[#4c5d7c] border-b-[#6c80a8] bg-linear-to-b from-[#aec4ea] to-[#9bb3e2] pr-[3px] pl-[5px] text-[11px] text-white', TAHOMA)}>
                <span className="mt-[3px]"><Page /></span>
                <h2 className="mt-[3px] ml-[2px] flex-1">Extraction of Events and Pages Data - Google Chrome</h2>
                <div className="flex h-[17px] rounded-b-[4px] border border-t-0 border-[#5b729c]">
                    <button aria-label="Minimize" className="flex w-[25px] items-center justify-center border-r border-[#5b729c]">
                        <svg className="h-3 w-3" viewBox="0 0 12 12"><rect x="0.5" y="7.500" width="11" height="3" rx="1" fill="#dbe6f8" stroke="#52617e" /></svg>
                    </button>
                    <button aria-label="Restore" className="flex w-[25px] items-center justify-center border-r border-[#5b729c]">
                        <svg className="h-3 w-3" viewBox="0 0 12 12"><path d="M.5 1.500 H11.500 V10.500 H.5Z M3.500 4.500 V7.500 H8.500 V4.500Z" fill="#dbe6f8" fillRule="evenodd" stroke="#52617e" /></svg>
                    </button>
                    <button aria-label="Close" className="flex w-[41px] items-center justify-center">
                        <svg className="h-3 w-3" viewBox="0 0 12 12"><path d="M2 2 L10 10 M10 2 L2 10" stroke="#52617e" strokeWidth="4" /><path d="M2 2 L10 10 M10 2 L2 10" stroke="#dbe6f8" strokeWidth="2" /></svg>
                    </button>
                </div>
            </div>
            <div className="flex min-h-0 flex-1">
                <BrowserStrip />
                <Explorer />
            </div>
        </div>
        <TaskBar />
    </section>
);

const App: React.FC = () => (
    <div className="flex h-screen flex-col overflow-hidden bg-[#b9d4f0] text-black">
        <TitleBar />
        <div className="mr-px mb-px ml-[3px] flex min-h-0 flex-1 flex-col border border-[#5a6b82] bg-[#f0f0f0]">
            <MainToolbar />
            <main className="flex min-h-0 flex-1">
                <aside className="flex w-[314px] shrink-0 flex-col">
                    <ConnectionsPanel />
                    <ConfigPanel />
                </aside>
                <RemoteDesktop />
            </main>
            <div className={clsx('flex h-[23px] shrink-0 bg-[#e3e3e3] pt-[3px] pl-1 text-xs text-[#6d6d6d]', SEGOE)}>
                <button className="flex h-5 w-[98px] items-center gap-1 rounded-t-[3px] border border-b-0 border-[#808080] bg-[#f0f0f0] pl-[3px]">
                    <svg className="h-4 w-4 shrink-0" viewBox="0 0 16 16">
                        <circle cx="8" cy="7" r="6.500" fill="#e4effa" stroke="#8ca8c8" />
                        <path d="M6 13 L8 16 L10 13Z" fill="#6c94c0" />
                        <text x="8" y="12" textAnchor="middle" fontSize="13" fontWeight="bold" fontFamily="Liberation Serif" fill="#1848a8">i</text>
                    </svg>
                    Notifications
                </button>
            </div>
        </div>
    </div>
);

export default App;
